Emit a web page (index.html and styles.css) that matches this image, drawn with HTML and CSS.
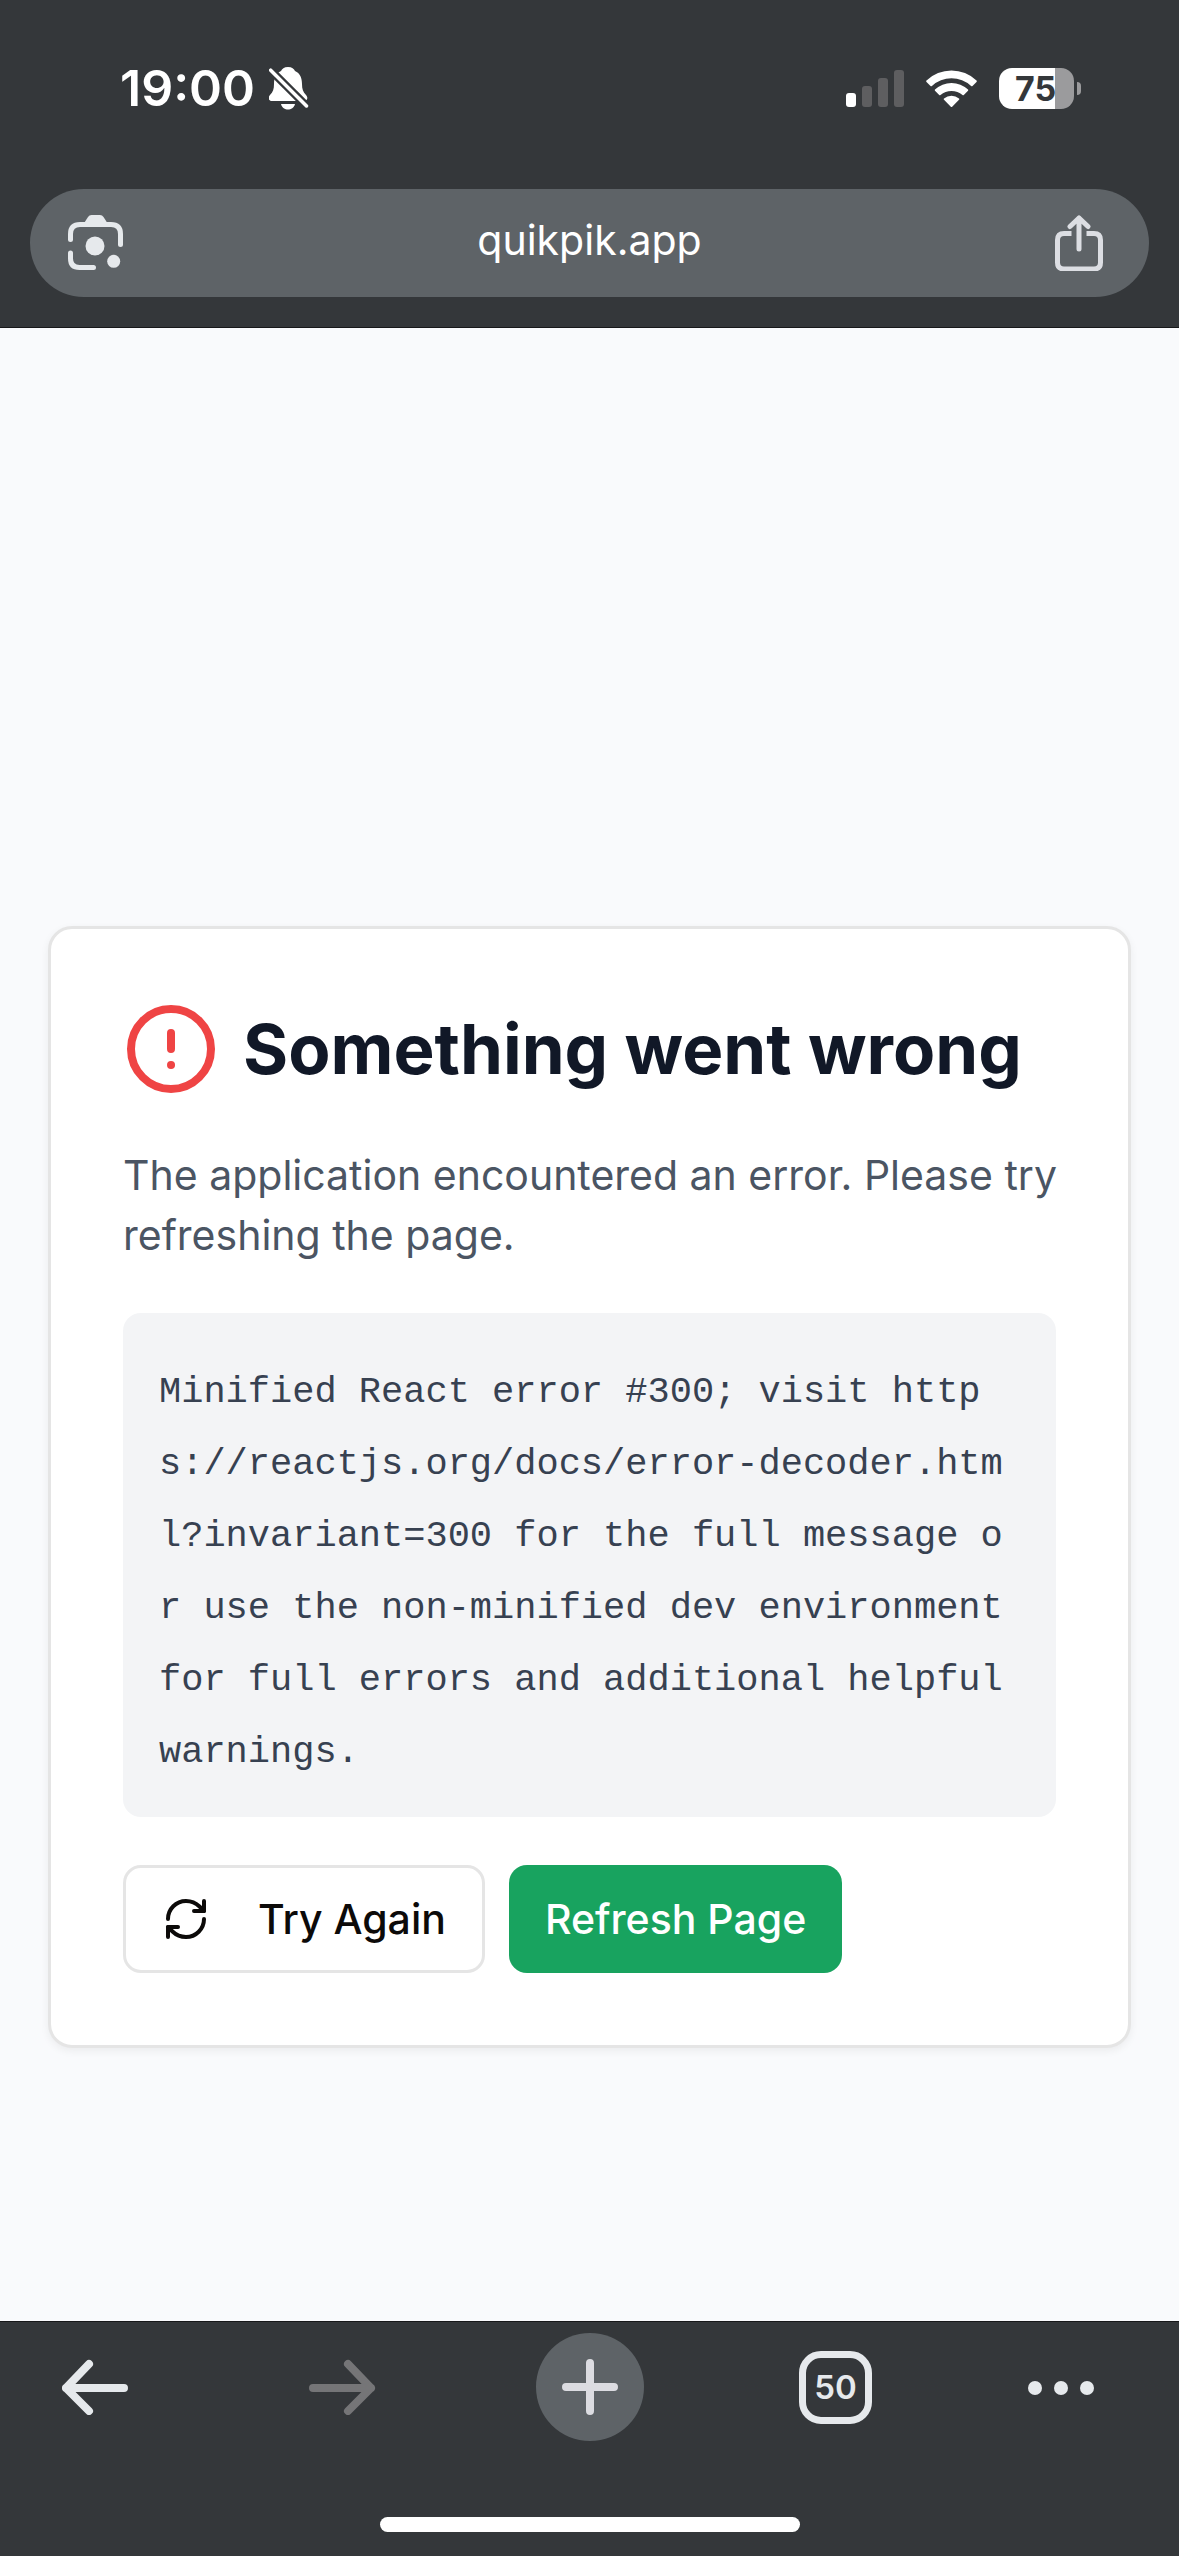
FILE: index.html
```html
<!DOCTYPE html>
<html lang="en">
<head>
<meta charset="utf-8">
<meta name="viewport" content="width=device-width, initial-scale=1">
<title>quikpik.app</title>
<link rel="stylesheet" href="styles.css">
</head>
<body>
<header class="top">
  <div class="status">
    <div class="status-left">
      <time class="clock">19:00</time>
      <svg class="bell" viewBox="0 0 40 43" role="img" aria-label="Silent mode">
        <path fill="#fff" d="M19 0c4 0 6 2 7 4 5 2 7 7 7 13 0 5 1 8 4 11 2 2 2 6-2 6H3c-4 0-4-4-2-6 3-3 4-6 4-11 0-6 2-11 7-13 1-2 3-4 7-4zM12 37h14c-1 4-4 5.500-7 5.500s-6-1.500-7-5.500z"/>
        <path stroke="#34373a" stroke-width="8" d="M-1 .5 40 41.500"/>
        <path stroke="#fff" stroke-width="3.500" stroke-linecap="round" d="M1.700 3.200 37.500 39"/>
      </svg>
    </div>
    <div class="status-right">
      <svg class="signal" viewBox="0 0 58 37" role="img" aria-label="Signal">
        <rect x="0" y="23" width="10" height="14" rx="3" fill="#fff"/>
        <g fill="#5e5e60"><rect x="16" y="16" width="10" height="21" rx="3"/><rect x="32" y="8" width="10" height="29" rx="3"/><rect x="48" y="0" width="10" height="37" rx="3"/></g>
      </svg>
      <svg class="wifi" viewBox="0 0 51 37" fill="#fff" role="img" aria-label="Wi-Fi">
        <path d="M.5 10.500a36 36 0 0 1 50 0q.7.7 0 1.400l-4 4q-.7.5-1.400 0a29 29 0 0 0-39.200 0q-.7.5-1.400 0l-4-4q-.7-.7 0-1.400z"/>
        <path d="M9 19.500a24 24 0 0 1 33 0q.6.600 0 1.300l-4.200 4.200q-.6.500-1.300 0a17 17 0 0 0-22 0q-.7.5-1.300 0l-4.200-4.200q-.6-.7 0-1.300z"/>
        <path d="M18 28.500a12 12 0 0 1 15 0q.6.600 0 1.300l-6.800 6.900q-.7.500-1.400 0l-6.800-6.900q-.6-.7 0-1.300z"/>
      </svg>
      <div class="battery"><span class="battery-level">75</span><span class="battery-tip"></span></div>
    </div>
  </div>
  <div class="address">
    <button class="icon-button" type="button" aria-label="Search with camera">
      <svg class="address-icon" viewBox="0 0 56 56">
        <path fill="#e6e9ec" d="M15.500 9 20 2q1.300-2 3.500-2h8.500q2.200 0 3.500 2L40 9z"/>
        <path fill="none" stroke="#e6e9ec" stroke-width="5" stroke-linecap="round" d="M2.500 24.500V19q0-9.500 9.500-9.500h31q9.500 0 9.500 9.500v10.500M2.500 38v5.500q0 9 9 9h14"/>
        <circle cx="27" cy="31" r="9.500" fill="#e6e9ec"/><circle cx="45.700" cy="46.300" r="6.500" fill="#e6e9ec"/>
      </svg>
    </button>
    <input class="url" type="text" value="quikpik.app" aria-label="Address" readonly>
    <button class="icon-button" type="button" aria-label="Share">
      <svg class="address-icon" viewBox="0 0 56 56" fill="none" stroke="#dcdee3" stroke-width="5">
        <path d="M16.500 18.500H9q-6.500 0-6.500 6.500v22.500q0 6.500 6.500 6.500h30q6.500 0 6.500-6.500V25q0-6.500-6.500-6.500h-7.500"/>
        <path stroke-linecap="round" stroke-linejoin="round" d="M24 34V3M15 11.500l9-8.500 9 8.500"/>
      </svg>
    </button>
  </div>
</header>

<main class="page">
  <section class="card">
    <div class="card-head">
      <svg class="alert" viewBox="0 0 24 24" fill="none" stroke="#ef4444" stroke-width="2" stroke-linecap="round" stroke-linejoin="round" aria-hidden="true"><circle cx="12" cy="12" r="10"/><path d="M12 8v4M12 16h.01"/></svg>
      <h1 class="title">Something went wrong</h1>
    </div>
    <p class="message">The application encountered an error. Please try refreshing the page.</p>
    <pre class="details">Minified React error #300; visit https://reactjs.org/docs/error-decoder.html?invariant=300 for the full message or use the non-minified dev environment for full errors and additional helpful warnings.</pre>
    <div class="actions">
      <button class="button outline" type="button">
        <svg class="refresh" viewBox="0 0 24 24" fill="none" stroke="currentColor" stroke-width="2" stroke-linecap="round" stroke-linejoin="round" aria-hidden="true"><path d="M3 12a9 9 0 0 1 9-9 9.750 9.750 0 0 1 6.740 2.740L21 8"/><path d="M21 3v5h-5"/><path d="M21 12a9 9 0 0 1-9 9 9.750 9.750 0 0 1-6.740-2.740L3 16"/><path d="M8 16H3v5"/></svg>
        Try Again
      </button>
      <button class="button primary" type="button">Refresh Page</button>
    </div>
  </section>
</main>

<footer class="bottom">
  <nav class="toolbar" aria-label="Browser">
    <button class="icon-button" type="button" aria-label="Back">
      <svg class="arrow" viewBox="0 0 68 56" fill="none" stroke="#e6e9ec" stroke-width="8" stroke-linecap="round" stroke-linejoin="round"><path d="M62 29H4M27 5 4 29l23 23"/></svg>
    </button>
    <button class="icon-button" type="button" aria-label="Forward" disabled>
      <svg class="arrow" viewBox="0 0 68 56" fill="none" stroke="#757577" stroke-width="8" stroke-linecap="round" stroke-linejoin="round"><path d="M4 29h58M39 5l23 24-23 23"/></svg>
    </button>
    <button class="icon-button new-tab" type="button" aria-label="New tab">
      <svg class="plus" viewBox="0 0 56 56" fill="none" stroke="#dcdce1" stroke-width="8" stroke-linecap="round"><path d="M28 4v48M4 28h48"/></svg>
    </button>
    <button class="icon-button tabs" type="button">50</button>
    <button class="icon-button" type="button" aria-label="More">
      <svg class="more" viewBox="0 0 68 16" fill="#e6e9ec"><circle cx="8" cy="9" r="7"/><circle cx="34" cy="9" r="7"/><circle cx="60" cy="9" r="7"/></svg>
    </button>
  </nav>
  <div class="home-indicator"></div>
</footer>
</body>
</html>
```
FILE: styles.css
```css
* {
  box-sizing: border-box;
}

body {
  margin: 0;
  min-height: 100vh;
  display: flex;
  flex-direction: column;
  background: #f9fafc;
  font-family: Inter, "Liberation Sans", sans-serif;
}

svg {
  display: block;
  flex: none;
}

button {
  font-family: inherit;
  cursor: pointer;
}

.icon-button {
  display: flex;
  align-items: center;
  justify-content: center;
  padding: 0;
  border: 0;
  background: none;
}

/* Status bar and address bar */
.top {
  padding: 52px 30px 30px;
  background: #34373a;
  border-bottom: 1px solid #17181a;
}

.status {
  display: flex;
  align-items: center;
  justify-content: space-between;
  height: 72px;
  padding: 0 68px 0 90px;
  margin-bottom: 65px;
}

.status-left,
.status-right {
  display: flex;
  align-items: center;
  color: #fff;
}

.status-left {
  gap: 14px;
}

.status-right {
  gap: 22px;
}

.clock {
  font-size: 50px;
  font-weight: 600;
}

.bell {
  width: 40px;
  height: 43px;
}

.signal {
  width: 58px;
  height: 37px;
}

.wifi {
  width: 51px;
  height: 37px;
}

.battery {
  display: flex;
  align-items: center;
  gap: 3px;
}

.battery-level {
  width: 75px;
  height: 41px;
  padding-left: 16px;
  border-radius: 13px;
  background: linear-gradient(to right, #fff 75%, #9b9b9d 75%);
  color: #34373a;
  font-size: 34px;
  font-weight: 700;
  line-height: 41px;
}

.battery-tip {
  width: 4px;
  height: 13px;
  border-radius: 0 6px 6px 0;
  background: #9b9b9d;
}

.address {
  display: flex;
  align-items: center;
  height: 108px;
  padding: 0 38px;
  border-radius: 54px;
  background: #5e6367;
}

.address-icon {
  width: 56px;
  height: 56px;
}

.url {
  flex: 1;
  min-width: 0;
  padding: 0 0 6px;
  border: 0;
  outline: 0;
  background: none;
  color: #fff;
  font-family: inherit;
  font-size: 41px;
  text-align: center;
}

/* Page */
.page {
  flex: 1;
  padding: 598px 48px 48px;
}

.card {
  display: flex;
  flex-direction: column;
  gap: 48px;
  padding: 72px;
  border: 3px solid #e5e5e5;
  border-radius: 24px;
  background: #fff;
  box-shadow: 0 3px 9px rgba(0, 0, 0, 0.06);
}

.card-head {
  display: flex;
  align-items: center;
  gap: 24px;
}

.alert {
  width: 96px;
  height: 96px;
}

.title {
  margin: 0;
  color: #111827;
  font-size: 69px;
  font-weight: 700;
  line-height: 96px;
}

.message {
  margin: 0 -12px 0 0;
  color: #4b5563;
  font-size: 41px;
  line-height: 60px;
}

.details {
  margin: 0;
  padding: 43px 36px 29px;
  border-radius: 18px;
  background: #f3f4f6;
  color: #374151;
  font-family: "Liberation Mono", monospace;
  font-size: 37px;
  line-height: 72px;
  white-space: pre-wrap;
  word-break: break-all;
}

.actions {
  display: flex;
  gap: 24px;
}

.button {
  display: flex;
  align-items: center;
  gap: 48px;
  height: 108px;
  padding: 0 36px;
  border: 0;
  border-radius: 18px;
  font-size: 41px;
  font-weight: 500;
  line-height: 60px;
  white-space: nowrap;
}

.outline {
  border: 3px solid #e5e5e5;
  background: #fff;
  color: #0c0a09;
}

.primary {
  background: #18a35f;
  color: #fff;
}

.refresh {
  width: 48px;
  height: 48px;
}

/* Browser toolbar */
.bottom {
  padding: 11px 0 24px;
  border-top: 1px solid #17181a;
  background: #34373a;
}

.toolbar {
  display: grid;
  grid-template-columns: 191fr 303fr 192fr 299fr 152fr;
  align-items: center;
  justify-items: center;
  padding-right: 42px;
}

.arrow {
  width: 68px;
  height: 56px;
}

.new-tab {
  width: 108px;
  height: 108px;
  border-radius: 50%;
  background: #5e6367;
}

.plus {
  width: 56px;
  height: 56px;
}

.tabs {
  width: 73px;
  height: 73px;
  border: 7px solid #e6e9ec;
  border-radius: 22px;
  color: #e6e9ec;
  font-size: 33px;
  font-weight: 600;
}

.more {
  width: 68px;
  height: 16px;
}

.home-indicator {
  width: 420px;
  height: 15px;
  margin: 76px auto 0;
  border-radius: 8px;
  background: #fff;
}
```
